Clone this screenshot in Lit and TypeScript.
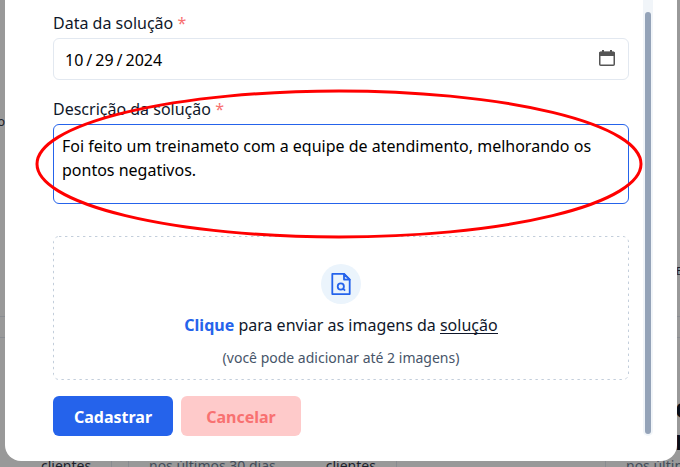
import { LitElement, html, css, svg } from "lit";
import { customElement } from "lit/decorators.js";

const calendarIcon = svg`
  <svg class="calendar" width="16" height="17" viewBox="0 0 16 17" fill="none">
    <path d="M1.5 1.5h13a1.5 1.5 0 0 1 1.5 1.5v3H0V3a1.5 1.5 0 0 1 1.5-1.5Z" fill="#555" />
    <path d="M3 0h2v2H3zM11 0h2v2h-2z" fill="#555" />
    <rect x=".75" y="2.5" width="14.5" height="12.75" rx="1" stroke="#555" stroke-width="1.5" />
  </svg>`;

const fileSearchIcon = svg`
  <svg width="20" height="24" viewBox="0 0 20 24" fill="none" stroke="#2563eb" stroke-width="1.8" stroke-linejoin="round">
    <path d="M1.3 1.9H13L18.7 7.6V22.1H1.3Z" />
    <path d="M13 1.9V7.6H18.7Z" fill="#c9dcfa" />
    <circle cx="9.8" cy="14.5" r="3.1" />
    <path d="M12 16.7L14.1 18.6" />
  </svg>`;

@customElement("app-backdrop")
export class AppBackdrop extends LitElement {
  static styles = css`
    :host {
      display: grid;
      grid-template-rows: 317px 21px 138px;
      width: 680px;
      height: 476px;
      background: #999;
      color: #1b202a;
    }
    .top { display: flex; justify-content: space-between; align-items: flex-start; font-size: 13px; line-height: 18px; border-bottom: 1px solid #898c91; box-sizing: border-box; }
    .left { display: flex; justify-content: flex-end; padding-top: 112px; width: 5px; }
    .right { padding-top: 262px; width: 4px; font-size: 11px; }
    .band { border-bottom: 1px solid #898c91; box-sizing: border-box; }
    .cards { display: grid; grid-template-columns: 112px 17px 268px 209px 74px; }
    .card { display: flex; align-items: flex-end; border-right: 1px solid #898c91; box-sizing: border-box; font-size: 14px; line-height: 20px; white-space: nowrap; }
    .muted { color: #434b58; }
    .a { padding-left: 41px; }
    .b { padding-left: 20px; gap: 50px; }
    .last { flex-direction: column; align-items: flex-start; justify-content: flex-end; padding-left: 20px; border: 0; }
    .figure { font-size: 26px; line-height: 32px; font-weight: 700; padding-left: 49px; color: #080e18; }
  `;
  render() {
    return html`
      <div class="top"><div class="left">o</div><div class="right">E</div></div>
      <div class="band"></div>
      <div class="cards">
        <div class="card a">clientes</div>
        <div class="card"></div>
        <div class="card b"><span class="muted">nos últimos 30 dias</span><span>clientes</span></div>
        <div class="card"></div>
        <div class="card last">
          <span class="figure">o</span><span class="figure">m</span>
          <span class="muted">nos últimos</span>
        </div>
      </div>
    `;
  }
}

@customElement("app-root")
export class AppRoot extends LitElement {
  static styles = css`
    :host {
      display: block;
      position: relative;
      width: 680px;
      height: 467px;
      overflow: hidden;
      font-family: "Noto Sans", sans-serif;
      font-size: 16px;
      line-height: 24px;
      color: #0f172a;
    }
    .modal {
      position: absolute;
      inset: 0 3px 6px 5px;
      box-sizing: border-box;
      display: flex;
      gap: 14px;
      padding-left: 48px;
      background: #fff;
      border-radius: 0 0 16px 16px;
    }
    .form { width: 576px; padding-top: 11px; }
    .label { height: 24px; margin-bottom: 3px; }
    .required { color: #f87171; }
    .date {
      display: flex;
      align-items: center;
      justify-content: space-between;
      box-sizing: border-box;
      height: 42px;
      margin-bottom: 17px;
      padding: 2px 13px 0 11px;
      border: 1px solid #e2e8f0;
      border-radius: 6px;
      color: #000;
    }
    .parts { display: flex; gap: 3px; }
    .calendar { margin-top: -3px; }
    .description {
      box-sizing: border-box;
      height: 80px;
      margin-bottom: 32px;
      padding: 9px 8px;
      border: 1px solid #2563eb;
      border-radius: 6px;
      color: #000;
    }
    .upload {
      position: relative;
      display: flex;
      flex-direction: column;
      align-items: center;
      box-sizing: border-box;
      height: 144px;
      margin-bottom: 16px;
      padding-top: 28px;
    }
    .outline { position: absolute; inset: 0; }
    .badge {
      display: flex;
      align-items: center;
      justify-content: center;
      width: 40px;
      height: 40px;
      margin-bottom: 9px;
      border-radius: 50%;
      background: #ebf4fc;
    }
    .prompt b { color: #2563eb; }
    .prompt u { text-decoration: none; box-shadow: inset 0 -1px #0f172a; display: inline-block; height: 21px; line-height: 24px; }
    .hint { margin-top: 11px; font-size: 14px; line-height: 20px; color: #475569; }
    .actions { display: flex; gap: 8px; }
    .button {
      display: flex;
      align-items: center;
      justify-content: center;
      box-sizing: border-box;
      width: 120px;
      height: 40px;
      padding: 2px 0 0;
      border: 0;
      border-radius: 6px;
      font: inherit;
      font-weight: 700;
    }
    .primary { background: #2563eb; color: #fff; }
    .cancel { background: #fecaca; color: #f87171; }
    .track {
      box-sizing: border-box;
      width: 10px;
      height: 436px;
      padding: 12px 2px 2px;
      background: #f1f5f9;
      border-radius: 0 0 5px 5px;
    }
    .thumb { height: 422px; border-radius: 3px; background: #94a3b8; }
    .marker { position: absolute; inset: 0; pointer-events: none; }
  `;
  render() {
    return html`
      <app-backdrop></app-backdrop>
      <div class="modal">
        <div class="form">
          <div class="label">Data da solução <span class="required">*</span></div>
          <div class="date">
            <div class="parts"><span>10</span><span>/</span><span>29</span><span>/</span><span>2024</span></div>
            ${calendarIcon}
          </div>
          <div class="label">Descrição da solução <span class="required">*</span></div>
          <div class="description">Foi feito um treinameto com a equipe de atendimento, melhorando os pontos negativos.</div>
          <div class="upload">
            <svg class="outline" width="576" height="144" fill="none">
              <rect x=".5" y=".5" width="575" height="143" rx="5.5" stroke="#c3cedb" stroke-dasharray="2.4 3.6" />
            </svg>
            <div class="badge">${fileSearchIcon}</div>
            <div class="prompt"><b>Clique</b> para enviar as imagens da <u>solução</u></div>
            <div class="hint">(você pode adicionar até 2 imagens)</div>
          </div>
          <div class="actions">
            <button class="button primary">Cadastrar</button>
            <button class="button cancel">Cancelar</button>
          </div>
        </div>
        <div class="track"><div class="thumb"></div></div>
      </div>
      <svg class="marker" width="680" height="467" viewBox="0 0 680 467" fill="none">
        <ellipse cx="339" cy="164" rx="302" ry="73" stroke="#f00" stroke-width="3" />
      </svg>
    `;
  }
}
